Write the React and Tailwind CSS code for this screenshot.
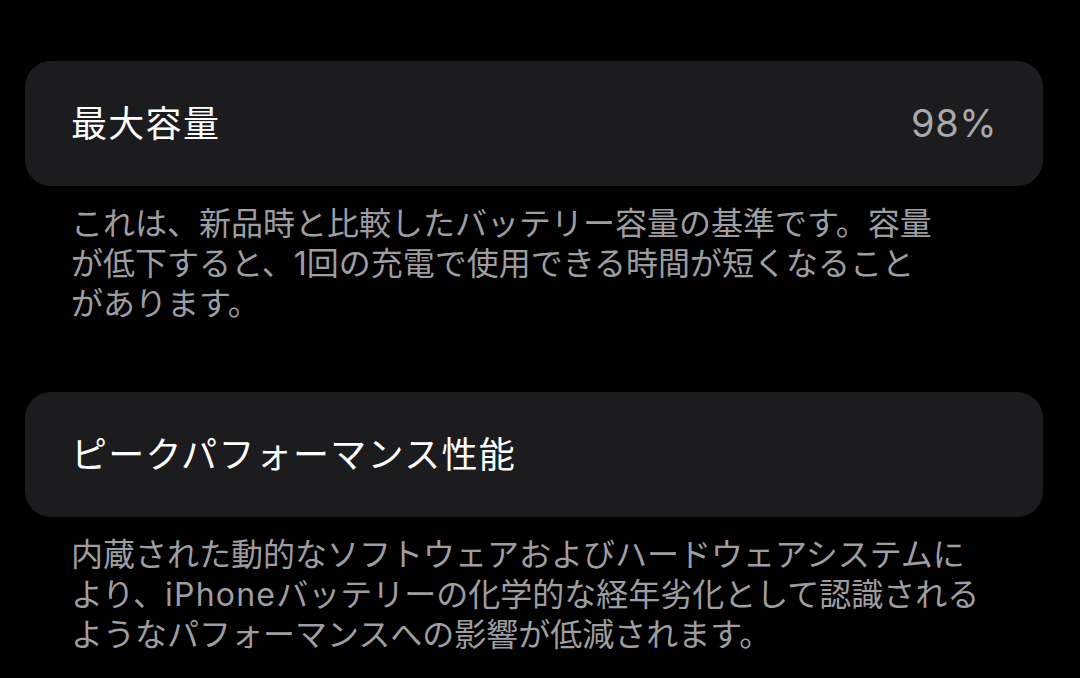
const JP = { fontFamily: '"Inter", "Noto Sans CJK JP", sans-serif' };

function Card({ title, value }) {
  return (
    <div className="flex h-[125px] items-center justify-between rounded-[26px] bg-[#1c1c1e] px-[46px]">
      <span className="text-[36px] tracking-[1.3px] text-white">{title}</span>
      {value && <span className="text-[38px] tracking-[0.5px] text-[#a9a9ae]">{value}</span>}
    </div>
  );
}

function Note({ lines, wide }) {
  return (
    <div className="mt-[18px] px-[46px] text-[32px] leading-[40px] text-[#9d9da2]">
      {lines.map((l, i) => (
        <div key={i} className="whitespace-nowrap">
          {l}
        </div>
      ))}
    </div>
  );
}

export default function App() {
  return (
    <div className="h-[678px] w-[1080px] overflow-hidden bg-black" style={JP}>
      <div className="flex flex-col px-[25px] pt-[61px] pr-[37px]">
        <Card title="最大容量" value="98%" />
        <Note
          lines={[
            "これは、新品時と比較したバッテリー容量の基準です。容量",
            "が低下すると、1回の充電で使用できる時間が短くなること",
            "があります。",
          ]}
        />
        <div className="mt-[68px]">
          <Card title="ピークパフォーマンス性能" />
        </div>
        <Note
          lines={[
            "内蔵された動的なソフトウェアおよびハードウェアシステムに",
            <>
              より、<span className="tracking-[1.2px]">iPhone</span>バッテリーの化学的な経年劣化として認識される
            </>,
            "ようなパフォーマンスへの影響が低減されます。",
          ]}
        />
      </div>
    </div>
  );
}
